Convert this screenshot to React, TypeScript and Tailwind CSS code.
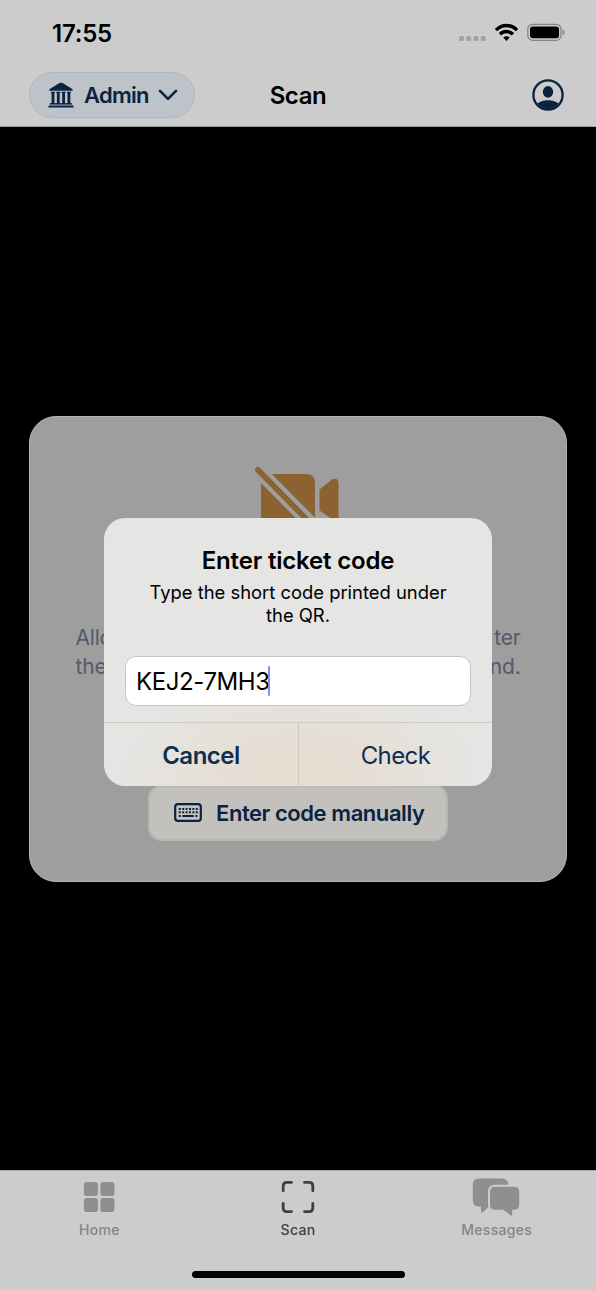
import React from "react";

type TabProps = {
  label: string;
  active?: boolean;
  children: React.ReactNode;
};

function StatusBar() {
  return (
    <div className="flex h-[66px] items-center justify-between pl-[52px] pr-[31px]">
      <span className="pt-[2px] text-[24px] leading-none font-semibold tracking-[-0.2px] text-black">
        17:55
      </span>
      <svg width="107" height="20" viewBox="0 0 107 20">
        <g fill="#a2a2a2">
          <rect x="1" y="13" width="5" height="5" rx="1.6" />
          <rect x="8.2" y="13" width="5" height="5" rx="1.6" />
          <rect x="15.5" y="13" width="5" height="5" rx="1.6" />
          <rect x="22.7" y="13" width="5" height="5" rx="1.6" />
        </g>
        <g fill="none" stroke="#000" strokeWidth="3.4">
          <path d="M38 7.2C44 0.9 53 0.9 59 7.2" />
          <path d="M42 11.3C45.8 7.6 51.2 7.6 55 11.3" />
        </g>
        <path d="M45.3 14.6C47.2 12.8 49.8 12.8 51.7 14.6L48.5 17.9Z" fill="#000" />
        <rect x="69.8" y="1.3" width="33.2" height="16" rx="4.8" fill="none" stroke="#858585" strokeWidth="1.3" />
        <rect x="72" y="3.4" width="29" height="11.8" rx="3" fill="#000" />
        <path d="M104.7 6.6C107.3 7.6 107.3 11.2 104.7 12.2Z" fill="#858585" />
      </svg>
    </div>
  );
}

function Header() {
  return (
    <div className="grid h-[60px] grid-cols-3 items-center px-[29px] pb-[2px]">
      <button className="flex h-[46px] w-[166px] items-center rounded-full border border-[#adb8c4] bg-[#bec2c9] pl-[18px] text-[#0b2341]">
        <svg className="shrink-0" width="26" height="26" viewBox="0 0 26 26" fill="currentColor">
          <path d="M1.4 7.3L11.4 1.1Q13 0.2 14.6 1.1L24.6 7.3V8.8H1.4Z" />
          <path d="M3 9.8h4v1.1h-.6v10H7V22H3v-1.1h.6v-10H3zM8.3 9.8h4v1.1h-.6v10h.6V22h-4v-1.1h.6v-10h-.6zM13.6 9.8h4v1.1H17v10h.6V22h-4v-1.1h.6v-10h-.6zM18.9 9.8h4v1.1h-.6v10h.6V22h-4v-1.1h.6v-10h-.6z" />
          <rect x="1.8" y="21.2" width="22.4" height="1.4" />
          <rect x="0.4" y="23.6" width="25.2" height="1.9" rx="0.6" />
        </svg>
        <span className="ml-[10px] text-[22px] leading-none font-semibold tracking-[-0.75px]">Admin</span>
        <svg className="ml-[9px] shrink-0" width="20" height="12" viewBox="0 0 20 12" fill="none" stroke="currentColor" strokeWidth="2.6" strokeLinecap="round" strokeLinejoin="round">
          <path d="M2 1.8L10 9.8L18 1.8" />
        </svg>
      </button>
      <h1 className="pt-[2px] text-center text-[24px] leading-none font-semibold tracking-[-0.4px] text-black">
        Scan
      </h1>
      <svg className="mr-[3px] justify-self-end" width="32" height="32" viewBox="0 0 32 32">
        <circle cx="16" cy="16" r="14.6" fill="none" stroke="#0b2341" strokeWidth="2.3" />
        <ellipse cx="16" cy="12.8" rx="5.2" ry="5.9" fill="#0b2341" />
        <path d="M5.5 24.8C9 20.1 23 20.1 26.5 24.8C21 32 11 32 5.5 24.8Z" fill="#0b2341" />
      </svg>
    </div>
  );
}

function CameraCard() {
  return (
    <div className="flex h-[466px] w-[538px] flex-col items-center rounded-[27px] border border-[#b4b3b0] bg-[#9e9e9e] pt-[48px]">
      <svg className="ml-[2px] shrink-0" width="88" height="66" viewBox="0 0 88 66">
        <path d="M6 9H51Q60 9 60 18V54Q60 63 51 63H15Q6 63 6 54Z" fill="#8c6231" />
        <path d="M64.5 24.5L76.5 14.7Q79 13 81.5 14Q83.5 15 83.5 18.5V54Q83.5 57 81 57L64.5 45.5Z" fill="#8c6231" />
        <path d="M-2 0L68 70.5" stroke="#9e9e9e" strokeWidth="14" />
        <path d="M2.8 4.8L62 65" stroke="#8c6231" strokeWidth="5.6" strokeLinecap="round" />
      </svg>
      <div className="mt-[92px] w-[445px] text-[21px] leading-[29px] tracking-[-0.2px] text-[#535a68]">
        <p className="flex justify-between">
          <span>Allo</span>
          <span>ter</span>
        </p>
        <p className="flex justify-between">
          <span>the</span>
          <span>nd.</span>
        </p>
      </div>
      <button className="mt-[104px] flex h-[56px] w-[300px] items-center rounded-[14px] border-2 border-[#bab7b1] bg-[#c3c1bd] pb-px pl-[24px] text-[#0b2341]">
        <svg className="shrink-0" width="28" height="19" viewBox="0 0 28 19">
          <rect x="1.2" y="1.2" width="25.6" height="16.6" rx="2.6" fill="none" stroke="currentColor" strokeWidth="2.2" />
          <g stroke="currentColor" strokeWidth="2">
            <path d="M4.8 6H24" strokeDasharray="2 1.4" />
            <path d="M4.8 9.3H24" strokeDasharray="2 1.4" />
            <path d="M4.8 12.9H6.8M8.4 12.9H19.8M21.4 12.9H23.4" />
          </g>
        </svg>
        <span className="ml-[14px] text-[22px] leading-none font-semibold tracking-[-0.44px] whitespace-nowrap">
          Enter code manually
        </span>
      </button>
    </div>
  );
}

function TicketDialog() {
  return (
    <div className="absolute top-[518px] left-[104px] flex h-[268px] w-[388px] flex-col overflow-hidden rounded-[21px] bg-[#e5e5e4] bg-[radial-gradient(ellipse_180px_90px_at_50%_94%,#e6ddd2_0%,#e6dfd5_45%,transparent_100%)] text-black">
      <div className="flex h-[204px] flex-col items-center px-[21px] pt-[28px]">
        <h2 className="text-[24px] leading-[30px] font-semibold tracking-[-0.18px]">
          Enter ticket code
        </h2>
        <p className="mt-[5px] text-center text-[18.4px] leading-[23px]">
          Type the short code printed under
          <br />
          the QR.
        </p>
        <div className="mt-[29px] flex h-[50px] w-[346px] shrink-0 items-center rounded-[11px] border border-[#c6c6c6] bg-white pl-[10px]">
          <span className="pt-[2px] text-[24px] leading-none tracking-[-0.4px]">KEJ2-7MH3</span>
          <span className="-ml-[2px] h-[30px] w-[2.5px] rounded-full bg-[#7c90ee]" />
        </div>
      </div>
      <div className="flex flex-1 border-t border-[#cfcbc5] text-[24px] leading-none text-[#0e2e51]">
        <button className="w-[195px] border-r border-[#cfc8bf] pt-[3px] font-semibold tracking-[-0.5px]">Cancel</button>
        <button className="flex-1 pt-[3px] tracking-[-0.6px]">Check</button>
      </div>
    </div>
  );
}

function Tab({ label, active, children }: TabProps) {
  return (
    <div className={active ? "flex flex-col items-center text-[#404040]" : "flex flex-col items-center text-[#8f8f8f]"}>
      <div className="flex h-[40px] items-center justify-center">{children}</div>
      <span className={active ? "mt-[4px] text-[14px] leading-[17px] font-medium tracking-[0.3px]" : "mt-[4px] text-[14px] leading-[17px] font-medium tracking-[0.3px] text-[#858585]"}>
        {label}
      </span>
    </div>
  );
}

function TabBar() {
  return (
    <div className="flex h-[120px] flex-col items-center border-t border-[#aaaaaa] bg-[#cccccc] pt-[6px]">
      <div className="grid w-full grid-cols-3">
        <Tab label="Home">
          <svg width="32" height="32" viewBox="0 0 32 32" fill="currentColor">
            <rect x="0.9" y="1" width="14" height="14" rx="2.8" />
            <rect x="17.4" y="1" width="14" height="14" rx="2.8" />
            <rect x="0.9" y="17" width="14" height="14" rx="2.8" />
            <rect x="17.4" y="17" width="14" height="14" rx="2.8" />
          </svg>
        </Tab>
        <Tab label="Scan" active>
          <svg width="34" height="34" viewBox="0 0 34 34" fill="none" stroke="currentColor" strokeWidth="2.8" strokeLinecap="round">
            <path d="M2.2 10.8V6Q2.2 2.4 5.8 2.4H10.5M23.5 2.4H28.2Q31.8 2.4 31.8 6V10.8M31.8 23.3V28Q31.8 31.6 28.2 31.6H23.5M10.5 31.6H5.8Q2.2 31.6 2.2 28V23.3" />
          </svg>
        </Tab>
        <Tab label="Messages">
          <svg className="mr-[2px]" width="48" height="40" viewBox="0 0 48 40" fill="currentColor">
            <path d="M7 1.4H30Q36.4 1.4 36.4 8V30H16.5L11.2 35Q9.2 36.6 9 34.4V29.5H7Q0.8 29.5 0.8 23.2V7.6Q0.8 1.4 7 1.4Z" />
            <path d="M23.3 9.8H42Q47.2 9.8 47.2 15V27.5Q47.2 32.8 42 32.8H40.2V37.2Q40 39.4 38.2 38L31.5 32.8H23.3Q18 32.8 18 27.5V15Q18 9.8 23.3 9.8Z" stroke="#cccccc" strokeWidth="4" paintOrder="stroke" />
          </svg>
        </Tab>
      </div>
      <div className="mt-[33px] h-[7px] w-[213px] shrink-0 rounded-full bg-black" />
    </div>
  );
}

export default function App() {
  return (
    <div className="relative flex h-[1290px] w-[596px] flex-col overflow-hidden bg-black font-['Inter',sans-serif]">
      <header className="h-[127px] border-b border-[#9a9d9d] bg-[#cccccc]">
        <StatusBar />
        <Header />
      </header>
      <main className="flex flex-1 flex-col items-center pt-[289px]">
        <CameraCard />
      </main>
      <TabBar />
      <TicketDialog />
    </div>
  );
}
